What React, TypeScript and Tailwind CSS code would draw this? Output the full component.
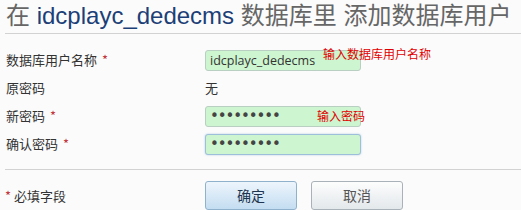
import React from 'react';

const cjk = "font-['Noto_Sans_CJK_SC',sans-serif]";

const Star = () => <span className="ml-[5px] text-[#c0353b]">*</span>;

const TextInput = ({ value, type = 'text', focused = false }: { value: string; type?: string; focused?: boolean }) => (
    <input
        type={type}
        defaultValue={value}
        readOnly
        className={`w-[156px] h-[21px] rounded-[3px] border bg-[#cdf5cf] px-[4px] text-[#333] outline-none ${
            focused
                ? 'border-[#9dbfd9] shadow-[0_0_2px_rgba(120,170,210,0.6)]'
                : 'border-[#b9cfc2]'
        } ${
            type === 'password'
                ? "font-['DejaVu_Sans',sans-serif] text-[15px] tracking-[-1.1px] text-[#444]"
                : "font-['Open_Sans',sans-serif] text-[12.5px]"
        }`}
    />
);

const App = () => {
    return (
        <div className={`w-[521px] h-[210px] bg-[#fbfbfb] overflow-hidden ${cjk}`}>
            {/* Title */}
            <h1 className="pl-[6px] pt-[1px] h-[33px] text-[24px] leading-[30px] text-[#666] font-['Liberation_Sans','Noto_Sans_CJK_SC',sans-serif]">
                在 <span className="text-[#1d3f77]">idcplayc_dedecms</span> 数据库里 添加数据库用户
            </h1>
            <div className="ml-[5px] h-px bg-[#d2d2d2]" />

            {/* Form rows */}
            <div className="pt-[12px] text-[13px] text-[#333]">
                <div className="flex items-center h-[28px]">
                    <div className="w-[205px] pl-[6px]">数据库用户名称<Star /></div>
                    <div className="relative">
                        <TextInput value="idcplayc_dedecms" />
                        <span className="absolute left-[118px] top-[-3px] text-[12px] leading-[14px] whitespace-nowrap text-[#e00000]">输入数据库用户名称</span>
                    </div>
                </div>
                <div className="flex items-center h-[28px]">
                    <div className="w-[205px] pl-[6px]">原密码</div>
                    <div>无</div>
                </div>
                <div className="flex items-center h-[28px]">
                    <div className="w-[205px] pl-[6px]">新密码<Star /></div>
                    <div className="relative">
                        <TextInput type="password" value="123456789" />
                        <span className="absolute left-[112px] top-[3px] text-[12px] leading-[14px] whitespace-nowrap text-[#e00000]">输入密码</span>
                    </div>
                </div>
                <div className="flex items-center h-[28px]">
                    <div className="w-[205px] pl-[6px]">确认密码<Star /></div>
                    <TextInput type="password" value="123456789" focused />
                </div>
            </div>

            <div className="mt-[11px] ml-[5px] h-px bg-[#d2d2d2]" />

            {/* Footer */}
            <div className="flex items-center pt-[11px] text-[13px]">
                <div className="w-[205px] pl-[5px] text-[#333]">
                    <span className="text-[#c0353b]">*</span> 必填字段
                </div>
                <button className="w-[92px] h-[29px] rounded-[3px] border border-[#90b1cc] bg-gradient-to-b from-[#edf5fc] to-[#c4ddf1] text-[14px] text-[#1e3550]">
                    确定
                </button>
                <button className="ml-[14px] w-[92px] h-[29px] rounded-[3px] border border-[#a9b2b9] bg-gradient-to-b from-[#fdfdfd] to-[#e3e8eb] text-[14px] text-[#555]">
                    取消
                </button>
            </div>
        </div>
    );
};

export default App;
